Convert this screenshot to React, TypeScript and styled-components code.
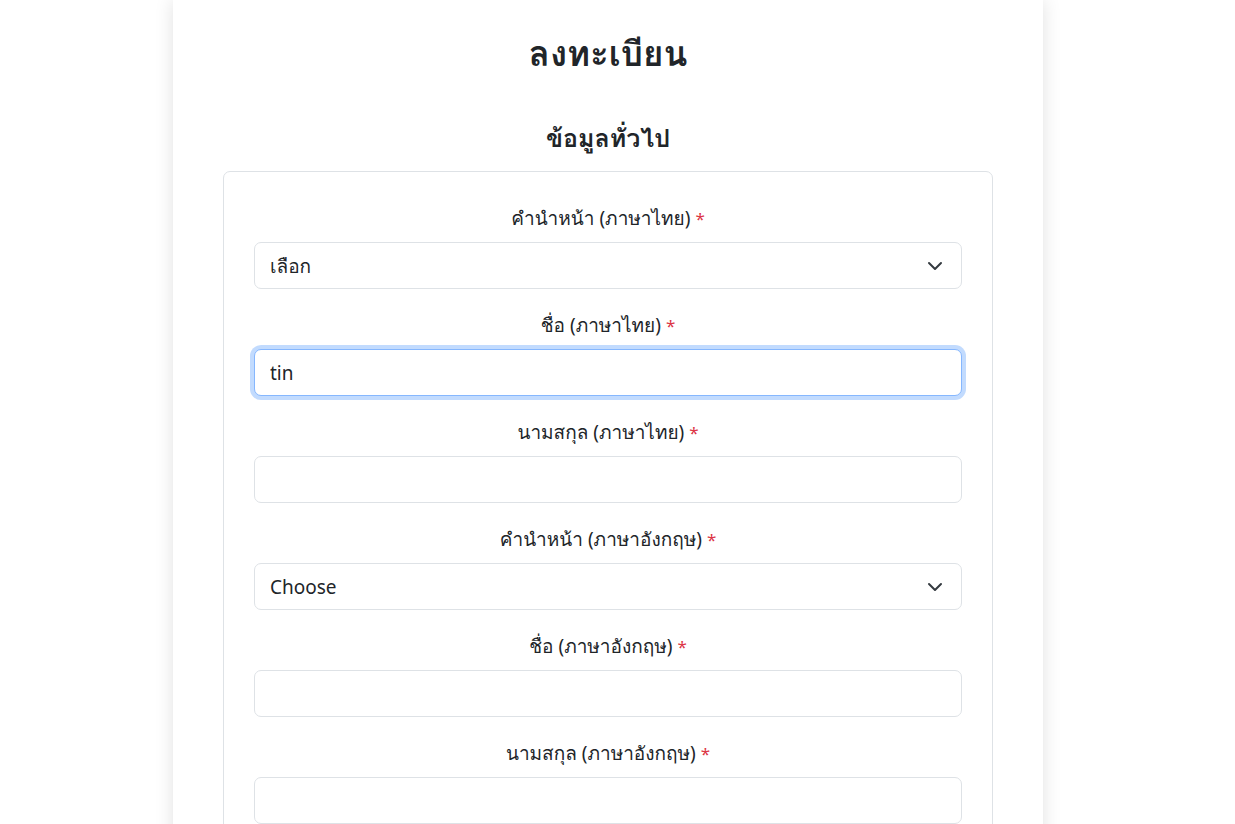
import React from "react";
import styled, { createGlobalStyle, css } from "styled-components";

const Global = createGlobalStyle`
  html, body { margin: 0; padding: 0; background: #ffffff; }
  body {
    font-family: "Noto Sans", Tahoma, "Leelawadee UI", Waree, Loma, Garuda, Umpush, "Noto Sans Thai", sans-serif;
    color: #212529;
  }
  * { box-sizing: border-box; }
`;

const Page = styled.div`
  display: flex;
  justify-content: center;
  padding: 0 19px 40px 0;
`;

const Card = styled.main`
  width: 870px;
  background: #fff;
  box-shadow: 0 0 18px rgba(0, 0, 0, 0.12);
  padding: 28px 50px 40px;
  display: flex;
  flex-direction: column;
  align-items: center;
`;

const Title = styled.h1`
  margin: 0 0 40px;
  font-size: 35px;
  font-weight: 700;
  line-height: 50px;
  text-align: center;
`;

const Section = styled.h2`
  margin: 0 0 15px;
  font-size: 25px;
  font-weight: 700;
  line-height: 38px;
  text-align: center;
`;

const Box = styled.section`
  width: 770px;
  border: 1px solid #dee2e6;
  border-radius: 7px;
  padding: 34px 30px 10px;
  display: flex;
  flex-direction: column;
`;

const Field = styled.div`
  display: flex;
  flex-direction: column;
  margin-bottom: 24px;
`;

const Label = styled.label`
  display: block;
  text-align: center;
  font-size: 19px;
  line-height: 25px;
  margin-bottom: 11px;
  color: #212529;
`;

const Req = styled.span`
  color: #dc3545;
  font-size: 17px;
`;

const control = css<{ $focused?: boolean }>`
  width: 100%;
  height: 47px;
  padding: 0 15px;
  font-family: inherit;
  font-size: 19px;
  color: #212529;
  background: #fff;
  border: 1px solid #dee2e6;
  border-radius: 7px;
  outline: none;
  ${(p) =>
    p.$focused &&
    css`
      border-color: #86b7fe;
      box-shadow: 0 0 0 4px rgba(13, 110, 253, 0.25);
    `}
`;

const Input = styled.input<{ $focused?: boolean }>`
  ${control}
`;

const SelectWrap = styled.div`
  position: relative;
`;

const Select = styled.select`
  ${control}
  appearance: none;
  -webkit-appearance: none;
  padding-right: 48px;
`;

const Chevron = styled.svg`
  position: absolute;
  right: 19px;
  top: 50%;
  width: 16px;
  height: 12px;
  margin-top: -6px;
  pointer-events: none;
`;

type F = { label: string; kind: "input" | "select"; value?: string; placeholder?: string; focused?: boolean };

const fields: F[] = [
  { label: "คำนำหน้า (ภาษาไทย)", kind: "select", placeholder: "เลือก" },
  { label: "ชื่อ (ภาษาไทย)", kind: "input", value: "tin", focused: true },
  { label: "นามสกุล (ภาษาไทย)", kind: "input" },
  { label: "คำนำหน้า (ภาษาอังกฤษ)", kind: "select", placeholder: "Choose" },
  { label: "ชื่อ (ภาษาอังกฤษ)", kind: "input" },
  { label: "นามสกุล (ภาษาอังกฤษ)", kind: "input" },
  { label: "เลขบัตรประจำตัวประชาชน", kind: "input" },
  { label: "วันเกิด", kind: "input" },
  { label: "เบอร์โทรศัพท์", kind: "input" },
  { label: "อีเมล", kind: "input" },
];

export default function App() {
  return (
    <>
      <Global />
      <Page>
        <Card>
          <Title>ลงทะเบียน</Title>
          <Section>ข้อมูลทั่วไป</Section>
          <Box>
            {fields.map((f, i) => (
              <Field key={i}>
                <Label>
                  {f.label} <Req>*</Req>
                </Label>
                {f.kind === "select" ? (
                  <SelectWrap>
                    <Select defaultValue="">
                      <option value="">{f.placeholder}</option>
                    </Select>
                    <Chevron viewBox="0 0 16 12" aria-hidden>
                      <path d="m2 3 6 6 6-6" fill="none" stroke="#343a40" strokeWidth="2" strokeLinecap="round" strokeLinejoin="round" />
                    </Chevron>
                  </SelectWrap>
                ) : (
                  <Input $focused={f.focused} defaultValue={f.value ?? ""} />
                )}
              </Field>
            ))}
          </Box>
        </Card>
      </Page>
    </>
  );
}
